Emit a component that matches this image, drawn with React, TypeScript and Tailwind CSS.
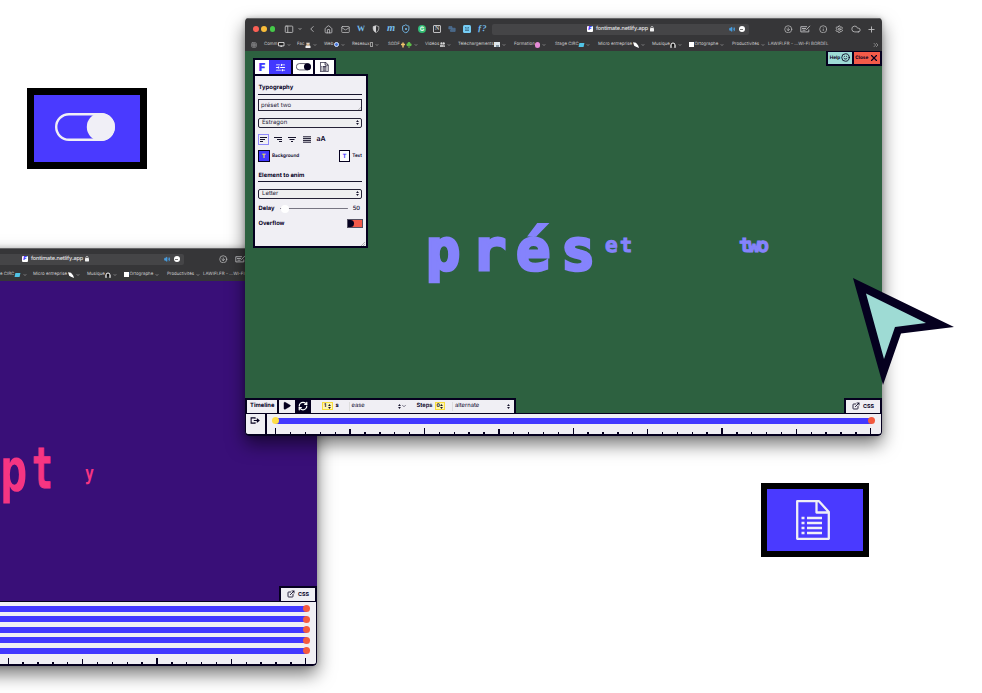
import React from "react";
import {
  ChevronDown, ChevronLeft, ChevronsRight, CircleArrowDown, Cloud,
  ExternalLink, Grid3x3, House, Info, Mail, PanelLeft, Play, Plus, RefreshCw, Settings, Shield,
  SlidersHorizontal, Smile, Volume2, X,
} from "lucide-react";

const ui = "font-['Inter','Liberation_Sans',sans-serif] [text-rendering:geometricPrecision]";

function Cell({ className, children }: { className: string; children: React.ReactNode }) {
  return <div className={`flex shrink-0 items-center justify-center ${className}`}>{children}</div>;
}

function ShieldHalf() {
  return (
    <svg viewBox="0 0 10 10" className="size-[8px]">
      <path d="M5 .8 8.5 2v3Q8.2 8 5 9.5 1.8 8 1.5 5V2Z" fill="none" stroke="#c4c4c6" strokeWidth=".9" />
      <path d="M5 .8V9.5Q1.8 8 1.5 5V2Z" fill="#d4d4d6" />
    </svg>
  );
}

function ToolbarStart() {
  return (
    <div className="flex h-[20px] w-[247px] items-center">
      <div className="ml-[8px] flex gap-[2.8px]">
        <span className="size-[5.5px] rounded-full bg-[#fb6055]" />
        <span className="size-[5.5px] rounded-full bg-[#f9bd3a]" />
        <span className="size-[5.5px] rounded-full bg-[#45ca49]" />
      </div>
      <Cell className="ml-[9px] w-[10px]"><PanelLeft className="h-[8.5px] w-[10px]" preserveAspectRatio="none" strokeWidth={2.2} /></Cell>
      <Cell className="ml-[3px] w-[5px]"><ChevronDown size={4} strokeWidth={5} /></Cell>
      <Cell className="ml-[5px] w-[10px]"><ChevronLeft size={12} strokeWidth={2} /></Cell>
      <Cell className="ml-[6px] w-[10px]"><House size={9} strokeWidth={2.2} /></Cell>
      <Cell className="ml-[7px] w-[10px]"><Mail size={9} strokeWidth={2} /></Cell>
      <Cell className="ml-[6px] w-[10px] font-['Liberation_Serif',serif] text-[8px] font-bold text-[#75bdec]">W</Cell>
      <Cell className="ml-[5px] w-[10px]"><ShieldHalf /></Cell>
      <Cell className="ml-[5px] w-[10px] font-['Liberation_Serif',serif] text-[10.5px] font-bold italic text-[#75bdec]">m</Cell>
      <Cell className="relative ml-[5px] w-[10px] text-[#75bdec]">
        <Shield size={9.5} strokeWidth={2.4} />
        <span className="absolute size-[2.5px] rounded-full bg-[#75bdec]" />
      </Cell>
      <Cell className="ml-[6px] w-[10px]">
        <span className="flex size-[8px] items-center justify-center rounded-full bg-[#32bb72] text-[6px] font-bold text-[#e7fff1]">G</span>
      </Cell>
      <Cell className="ml-[5px] w-[10px]">
        <span className="flex size-[7.5px] items-center justify-center rounded-[1px] border border-[#c0c0c2] font-['Liberation_Serif',serif] text-[6px] font-bold">N</span>
      </Cell>
      <Cell className="ml-[5px] w-[10px]">
        <svg viewBox="0 0 10 10" className="size-[8px]">
          <path d="M1 2h4v3H1z M5 4h4v4H3V6" fill="#4c6682" stroke="#4f7ba8" strokeWidth=".7" />
        </svg>
      </Cell>
      <Cell className="ml-[5px] w-[10px]">
        <svg viewBox="0 0 8 8" className="size-[8px]">
          <rect width="8" height="8" rx="1.5" fill="#76cdf5" />
          <path d="M2 2.5h1.5M4.5 2.5H6M2 4h4M2 5.5h4" stroke="#25445c" strokeWidth=".6" />
        </svg>
      </Cell>
      <Cell className="ml-[5px] w-[10px] font-['Liberation_Serif',serif] text-[9px] font-bold italic text-[#75bdec]">ƒ?</Cell>
    </div>
  );
}

function KeyboardPen() {
  return (
    <svg viewBox="0 0 11 8" className="h-[8px] w-[11px]" fill="none" stroke="currentColor" strokeWidth=".9">
      <path d="M7 1.7H.8v5.2h8V4.5M2 3.5h4M2.5 5.2h3M6.2 4.8 10 .8" />
    </svg>
  );
}

function Toolbar({ cropped }: { cropped: boolean }) {
  return (
    <div className="flex h-[20px] items-center text-[#c0c0c2]">
      {cropped ? <div className="w-[247px]" /> : <ToolbarStart />}
      <div className="flex h-[11px] w-[257px] items-center rounded-[2px] bg-[#454547]">
        <span className="ml-[94.5px] flex size-[6.5px] items-center justify-center rounded-[1px] bg-white text-[5.5px] font-black italic text-[#4238ff]">F</span>
        <span className="ml-[3px] w-[54px] whitespace-nowrap text-[5.5px] font-medium tracking-[-0.02em] text-[#e6e6e8]">fontimate.netlify.app</span>
        <svg viewBox="0 0 6 8" className="h-[5.5px] w-[4px]">
          <rect y="3" width="6" height="5" rx=".7" fill="#eee" />
          <path d="M1.3 3.5V2.2a1.7 1.7 0 013.4 0v1.3" fill="none" stroke="#eee" />
        </svg>
        <Volume2 className="ml-[74.5px] text-[#4a9ee0]" size={6.5} fill="#4a9ee0" strokeWidth={2.5} />
        <span className="ml-[3.5px] flex size-[6.5px] items-center justify-center rounded-full bg-white">
          <span className="h-[1px] w-[3px] bg-[#777]" />
        </span>
      </div>
      <Cell className="ml-[34.5px] w-[10px]"><CircleArrowDown size={8.5} strokeWidth={2} /></Cell>
      <Cell className="ml-[6px] w-[12px]"><KeyboardPen /></Cell>
      <Cell className="ml-[6.5px] w-[10px]"><Info size={8.5} strokeWidth={2} /></Cell>
      <Cell className="ml-[6px] w-[10px]"><Settings size={8.5} strokeWidth={2.4} /></Cell>
      <Cell className="ml-[6.5px] w-[10px]"><Cloud size={10} strokeWidth={2} /></Cell>
      <Cell className="ml-[6px] w-[10px]"><Plus size={9} strokeWidth={2.4} /></Cell>
    </div>
  );
}

const bookmarks: { label: string; icon?: React.ReactNode; width: string }[] = [
  { label: "Comm", width: "w-[33px]", icon: <Monitor /> },
  { label: "Fac", width: "w-[27px]", icon: <Person /> },
  { label: "Web", width: "w-[28px]", icon: <span className="size-[5px] rounded-full border border-[#d9e8ff] bg-[#4776dc]" /> },
  { label: "Reseaux", width: "w-[36px]", icon: <span className="h-[5px] w-[3px] border border-[#999]" /> },
  { label: "SGDF", width: "w-[37px]", icon: <Clover /> },
  { label: "Vidéos", width: "w-[33px]", icon: <Camera /> },
  { label: "Téléchargements", width: "w-[56px]", icon: <span className="flex size-[5.5px] items-end justify-center bg-[#dfe7ec]"><i className="h-[2px] w-[3px] bg-[#8799a5]" /></span> },
  { label: "Formation", width: "w-[41px]", icon: <span className="h-[6px] w-[4.5px] rounded-full bg-[#e58bd6]" /> },
  { label: "Stage CIRC", width: "w-[43px]", icon: <span className="h-[4px] w-[5px] -skew-x-12 bg-[#51c4e6]" /> },
  { label: "Micro entreprise", width: "w-[54px]", icon: <Feather /> },
  { label: "Musique", width: "w-[37px]", icon: <Headphones /> },
  { label: "Ortographe", width: "w-[43px]" },
  { label: "Productivités", width: "w-[36px]" },
];

function Monitor() {
  return (
    <svg viewBox="0 0 7 6" className="h-[5.5px] w-[6.5px]">
      <path d="M.5.5h6v3.7h-6zM2 5.5h3M3.5 4v1.5" fill="#222" stroke="#eee" strokeWidth=".9" />
    </svg>
  );
}
function Person() {
  return (
    <svg viewBox="0 0 6 6" className="size-[6px]">
      <path d="M.5 6V4L1.5 3.3h3L5.5 4V6Z" fill="#eee" />
      <circle cx="3" cy="2.2" r="1.5" fill="#d5b58b" />
      <path d="M1 1.2h4" stroke="#eee" strokeWidth=".7" />
    </svg>
  );
}
function Clover() {
  return (
    <svg viewBox="0 0 12 6" className="h-[6px] w-[12px]">
      <path d="M3 .5v5M1 2.5h4" stroke="#efc46b" strokeWidth="1.5" />
      <path d="M9 3v3" stroke="#5fc04b" />
      <circle cx="7.8" cy="2.8" r="1.4" fill="#5fc04b" />
      <circle cx="9" cy="1.5" r="1.4" fill="#5fc04b" />
      <circle cx="10.3" cy="2.8" r="1.4" fill="#5fc04b" />
    </svg>
  );
}
function Camera() {
  return (
    <svg viewBox="0 0 6 6" className="size-[5.5px]">
      <path d="M0 3h4v3H0zM4 4l2-1v3L4 5Z" fill="#bbb" />
      <circle cx="1.5" cy="1.5" r="1.1" fill="#ddd" />
      <circle cx="4" cy="1.5" r="1.3" fill="#ddd" />
    </svg>
  );
}
function Feather() {
  return (
    <svg viewBox="0 0 6 6" className="size-[6px]">
      <path d="M0 .3 3 .8l2.2 2.7L6 6 3 4.8 1.2 3.7Z" fill="#fff" />
    </svg>
  );
}
function Headphones() {
  return (
    <svg viewBox="0 0 6 6" className="size-[6px]">
      <path d="M1 4.5V3a2 2 0 014 0v1.5" fill="#111" stroke="#fff" strokeWidth="1" />
      <path d="M1 3.5V6M5 3.5V6" stroke="#ddd" strokeWidth="1.2" />
    </svg>
  );
}

function Bookmarks({ cropped }: { cropped: boolean }) {
  const shown = cropped ? bookmarks.slice(9) : bookmarks;
  return (
    <div className="flex h-[11.5px] items-center whitespace-nowrap text-[4.4px] text-[#c9c9cb]">
      {cropped ? (
        <div className="ml-[320px] flex w-[33px] shrink-0 items-center gap-[1px]">
          <span className="pt-[2px]">e CIRC</span>
          <span className="h-[4px] w-[5px] -skew-x-12 bg-[#51c4e6]" />
          <ChevronDown className="ml-[2px]" size={4} strokeWidth={3} />
        </div>
      ) : (
        <Grid3x3 className="ml-[6px] mr-[7px] text-[#929294]" size={6} strokeWidth={2.5} />
      )}
      {shown.map((b) => (
        <div key={b.label} className={`flex shrink-0 items-center gap-[0.5px] ${b.width}`}>
          {b.label === "Ortographe" && <span className="h-[4.5px] w-[5px] bg-white" />}
          <span className="pt-[2px]">{b.label}</span>
          {b.icon}
          <ChevronDown className="ml-[1.5px]" size={4} strokeWidth={3} />
        </div>
      ))}
      <span className="pt-[2px] tracking-[0.01em]">LAWIFI.FR - ...WI-FI BORDEL</span>
      <ChevronsRight className="ml-auto mr-[2px] text-[#aaa]" size={8} strokeWidth={2} />
    </div>
  );
}

function Document({ className, weight }: { className: string; weight: number }) {
  return (
    <svg viewBox="0 0 34 40" className={className} fill="none" stroke="currentColor" strokeWidth={weight} strokeLinejoin="round">
      <path d="M1.2 1.2H23L32.8 12V38.8H1.2Z M20.5 1.2V12.5H32.8" />
      <path d="M5.5 18h3M11 18h15M5.5 23h3M11 23h15M5.5 28h3M11 28h15M5.5 33h3M11 33h15" />
    </svg>
  );
}

function Toggle({ className }: { className: string }) {
  return (
    <svg viewBox="0 0 60 28" className={className}>
      <rect x="1.2" y="1.2" width="57.6" height="25.6" rx="12.8" fill="none" stroke="currentColor" strokeWidth="2.4" />
      <circle cx="45.8" cy="14" r="14" fill="currentColor" />
    </svg>
  );
}

function UpDown() {
  return (
    <svg viewBox="0 0 4 7" className="h-[5px] w-[3px] shrink-0" fill="#17142c">
      <path d="M2 0 4 2.7H0ZM2 7 0 4.3H4Z" />
    </svg>
  );
}

function Select({ value, className }: { value: string; className: string }) {
  return (
    <div className={`flex h-[10px] items-center justify-between rounded-[2px] border border-[#252236] bg-[#efeff0] pl-[3px] pr-[2.5px] text-[6px] leading-none text-[#28253a] ${className}`}>
      <span className="pt-[1.5px]">{value}</span>
      <UpDown />
    </div>
  );
}

function Align({ d }: { d: string }) {
  return (
    <svg viewBox="0 0 8 7" className="h-[7px] w-[8px]">
      <path d={d} stroke="#17142c" strokeWidth="1" />
    </svg>
  );
}

function Panel() {
  return (
    <div className="ml-[8px] mt-[7px] w-[114.5px] text-[#05001f]">
      <div className="flex h-[16px] w-[83px] border-2 border-b-0 border-[#05001f] bg-white">
        <div className="flex w-[14px] items-center justify-center text-[11px] font-black leading-none text-[#4238ff]">F</div>
        <div className="flex w-[22px] items-center justify-center bg-[#4238ff] text-white"><SlidersHorizontal className="h-[9px] w-[11px]" preserveAspectRatio="none" strokeWidth={2.5} /></div>
        <div className="flex w-[24px] items-center justify-center border-x-2 border-[#05001f]"><Toggle className="h-[7.5px] w-[15px]" /></div>
        <div className="flex flex-1 items-center justify-center"><Document className="h-[10px] w-[8.5px]" weight={3} /></div>
      </div>
      <div className="flex h-[174px] flex-col border-2 border-[#05001f] bg-[#f0eff4] pl-[3px] pr-[3.5px]">
        <div className="mt-[5px] flex h-[14px] items-start border-b border-[#17142c] pl-[0.5px] pt-[1.5px] text-[5.9px] font-bold leading-[10px]">Typography</div>
        <div className="relative mt-[3.5px] flex h-[12.5px] items-center border-[1.5px] border-[#252236] pl-[2px] text-[6px] leading-none text-[#28253a]">
          <span className="pt-[1.5px]">préset two</span>
          <svg viewBox="0 0 4 4" className="absolute bottom-0 right-0 size-[3px]"><path d="M0 4 4 0M2 4 4 2" stroke="#888" strokeWidth=".6" /></svg>
        </div>
        <Select value="Estragon" className="mt-[6.5px]" />
        <div className="mt-[6px] flex h-[12px] items-center">
          <div className="flex size-[11px] items-center justify-center border border-[#8e89fa]"><Align d="M0 1.5h7M0 3.5h5M0 5.5h3" /></div>
          <span className="ml-[5px] flex"><Align d="M0 1.5h8M3 3.5h5M5 5.5h3" /></span>
          <span className="ml-[6px] flex"><Align d="M0 1.5h8M1.5 3.5h5M3 5.5h2" /></span>
          <span className="ml-[7px] flex"><Align d="M0 .8h8M0 2.6h8M0 4.4h8M0 6.2h8" /></span>
          <span className="ml-[5.5px] text-[7px] font-semibold">aA</span>
        </div>
        <div className="mt-[4.5px] flex h-[12px] items-center text-[4.7px] font-semibold">
          <span className="flex size-[11.5px] items-center justify-center border border-[#05001f] bg-[#4238ff] text-[6px] font-bold text-[#f6e747]">T</span>
          <span className="ml-[2.5px] pt-[1.5px]">Background</span>
          <span className="ml-auto flex size-[11.5px] items-center justify-center border border-[#05001f] bg-white text-[6px] font-bold text-[#4238ff]">T</span>
          <span className="ml-[2px] pt-[1.5px]">Text</span>
        </div>
        <div className="mt-[6.5px] flex h-[13px] items-start border-b border-[#17142c] pl-[0.5px] pt-[1px] text-[5.9px] font-bold leading-[12px]">Element to anim</div>
        <Select value="Letter" className="mt-[7px]" />
        <div className="mt-[5px] flex h-[10px] items-center text-[5.8px]">
          <span className="w-[18px] pl-[0.5px] pt-[1.5px] font-bold">Delay</span>
          <span className="ml-[4px] flex h-[1.5px] w-[68px] items-center rounded-full bg-[#777582]"><i className="ml-[1px] size-[8px] rounded-full bg-white" /></span>
          <span className="ml-auto mr-[2px] pt-[1.5px] font-medium">50</span>
        </div>
        <div className="mt-[5px] flex h-[10px] items-center justify-between pl-[0.5px] text-[5.8px] font-bold">
          <span className="pt-[1.5px]">Overflow</span>
          <span className="mr-[-1px] flex h-[9px] w-[16.5px] items-center border border-[#555263] bg-[#f35a49]"><i className="h-full w-[6px] rounded-r-full bg-[#05001f]" /></span>
        </div>
        <svg viewBox="0 0 4 4" className="ml-auto mr-[-3px] mt-auto size-[4px]"><path d="M0 4 4 0M2 4 4 2" stroke="#888" strokeWidth=".6" /></svg>
      </div>
    </div>
  );
}

function NumberBox({ value }: { value: string }) {
  return (
    <span className="flex h-[8.5px] w-[10.5px] items-center justify-between border border-[#f7dd3e] bg-[#fff5b0] px-[1px] text-[5px] leading-none">
      <b>{value}</b>
      <UpDown />
    </span>
  );
}

function Controls() {
  return (
    <div className="flex h-[15px] w-[270.5px] items-stretch border-2 border-b-0 border-[#05001f] bg-[#f0eff4] text-[5.8px] text-[#05001f]">
      <div className="flex w-[30px] items-center justify-center pl-[0.5px] pt-[1px] font-bold">Timeline</div>
      <div className="flex w-[18px] items-center justify-center border-l-2 border-[#05001f] pr-[1px]"><Play size={9.5} fill="#05001f" strokeWidth={1} /></div>
      <div className="flex w-[16px] items-center justify-center bg-[#05001f] text-white"><RefreshCw size={10} strokeWidth={3} /></div>
      <div className="ml-[11px] flex items-center">
        <NumberBox value="1" />
        <b className="ml-[3px] w-[4px] pt-[1px]">s</b>
        <span className="ml-[9px] flex h-[9px] w-[52px] items-center justify-between border-l border-[#ddd] pl-[2px]"><span className="pt-[1px]">ease</span><UpDown /></span>
        <ChevronDown size={6} strokeWidth={2} />
        <b className="ml-[10px] w-[18px] pt-[1px] font-semibold">Steps</b>
        <NumberBox value="0" />
        <span className="ml-[7px] flex h-[9px] w-[58px] items-center justify-between border-l border-[#ddd] pl-[2px]"><span className="pt-[1px]">alternate</span><UpDown /></span>
      </div>
    </div>
  );
}

function Track() {
  return (
    <div className="flex h-[6px] items-center justify-between bg-[#4238ff]">
      <span className="ml-[-3px] size-[7px] rounded-full bg-[#ffde45]" />
      <span className="mr-[-3px] size-[7px] rounded-full bg-[#f35a3f]" />
    </div>
  );
}

const ticks = Array.from({ length: 41 }, (_, i) => i);

interface BrowserProps {
  place: string;
  canvas: string;
  tracks: number[];
  cropped?: boolean;
  children: React.ReactNode;
}

// A cropped window hangs off the left edge and leaves out the controls that lie beyond it.
function Browser({ place, canvas, tracks, cropped = false, children }: BrowserProps) {
  return (
    <section className={`absolute h-[418px] w-[637px] rounded-[4px] shadow-[0_8px_18px_rgba(0,0,0,0.55),0_0_5px_rgba(0,0,0,0.22)] ${place}`}>
      <div className="flex h-full flex-col overflow-hidden rounded-[4px]">
        <header className="h-[33px] shrink-0 border-t border-[#656567] bg-[#363638]">
          <Toolbar cropped={cropped} />
          <Bookmarks cropped={cropped} />
        </header>
        <main className={`relative flex min-h-0 flex-1 flex-col justify-between ${canvas}`}>
          {cropped ? <div /> : (
            <div className="flex items-start justify-between">
              <Panel />
              <div className="flex h-[14.5px] w-[56px] border-2 border-t-[1px] border-[#05001f] text-[4.7px] font-bold text-[#05001f]">
                <div className="flex w-[26px] items-center justify-center gap-[1px] border-r-2 border-[#05001f] bg-[#9edbd6]"><span className="pt-[1.5px]">Help</span><Smile size={9} strokeWidth={2.3} /></div>
                <div className="flex flex-1 items-center justify-center gap-[0.5px] bg-[#f35a49]"><span className="pt-[1.5px]">Close</span><X size={10} strokeWidth={2.8} /></div>
              </div>
            </div>
          )}
          {children}
          <div className="flex items-end justify-between">
            {cropped ? <div /> : <Controls />}
            <div className="flex h-[15px] w-[38px] items-center justify-center gap-[3px] border-2 border-b-0 border-[#05001f] bg-[#f0eff4] text-[5.4px] font-bold text-[#05001f]">
              <ExternalLink size={8} strokeWidth={2.5} />
              <span className="pt-[1.5px]">CSS</span>
            </div>
          </div>
        </main>
        <footer className="flex shrink-0 rounded-b-[4px] border-x-[1.5px] border-b-2 border-t-[1.5px] border-[#05001f] bg-[#f0eff4]">
          <div className="flex w-[21px] justify-center border-r-2 border-[#05001f] pt-[3px]">
            <svg viewBox="0 0 12 8" className="h-[7px] w-[11px]">
              <path d="M5.5 2V1H1v6h4.5V6M4 4H8" fill="none" stroke="#05001f" strokeWidth="1.2" />
              <path d="M7.5 1.2 11 4 7.5 6.8Z" fill="#05001f" />
            </svg>
          </div>
          <div className="flex flex-1 flex-col pl-[8px] pr-[9px]">
            <div className="flex flex-col gap-[4.5px] pt-[4px]">
              {tracks.map((t) => <Track key={t} />)}
            </div>
            <div className="mt-[4px] flex h-[6.5px] items-end justify-between">
              {ticks.map((i) => (
                <i key={i} className={`w-[1.4px] bg-[#05001f] ${i % 10 === 0 ? "h-full" : i % 5 === 0 ? "h-[5px]" : "h-[2.5px]"}`} />
              ))}
            </div>
          </div>
        </footer>
      </div>
    </section>
  );
}

const glyph = "absolute block leading-none font-['DejaVu_Sans_Mono',monospace] font-bold";
const heavy = "[-webkit-text-stroke:3px_#8583fc]";
const medium = "[-webkit-text-stroke:1px_#8583fc]";

export default function App() {
  return (
    <div className={`relative h-[693px] w-[982px] overflow-hidden bg-white ${ui}`}>
      <div className="absolute left-[27px] top-[88px] flex h-[81px] w-[120px] items-center justify-center border-[7px] border-black bg-[#4a3aff] pr-[4px] text-[#f0eff6]">
        <Toggle className="mt-[-3px] h-[28px] w-[60px]" />
      </div>

      <Browser place="left-[-320px] top-[248px]" canvas="bg-[#390f78]" tracks={[1, 2, 3, 4, 5]} cropped>
        <div className="absolute inset-y-0 left-[320px] right-0 text-[#f63582]">
          <span className={`${glyph} left-0 top-[160px] origin-left scale-x-[0.76] text-[60px]`}>p</span>
          <span className={`${glyph} left-[32px] top-[160px] origin-left scale-x-[0.6] text-[57px] [-webkit-text-stroke:1px_#f63582]`}>t</span>
          <span className={`${glyph} left-[85px] top-[182px] origin-left scale-x-[0.74] text-[20px]`}>y</span>
        </div>
      </Browser>

      <Browser place="left-[245px] top-[18px]" canvas="bg-[#2d6140]" tracks={[1]}>
        <div className="absolute inset-0 text-[#8583fc]">
          <span className={`${glyph} ${heavy} left-[181px] top-[172px] text-[57px]`}>p</span>
          <span className={`${glyph} ${heavy} left-[227px] top-[172px] text-[57px]`}>r</span>
          <span className={`${glyph} ${heavy} left-[271px] top-[172px] text-[57px]`}>é</span>
          <span className={`${glyph} ${heavy} left-[316px] top-[172px] text-[57px]`}>s</span>
          <span className={`${glyph} ${medium} left-[360px] top-[184px] text-[21px]`}>e</span>
          <span className={`${glyph} ${medium} left-[375px] top-[184px] text-[20px]`}>t</span>
          <span className={`${glyph} ${medium} left-[494px] top-[184px] text-[20px] tracking-[-3px]`}>two</span>
        </div>
      </Browser>

      <svg className="absolute left-[850px] top-[275px] h-[114px] w-[106px]" viewBox="850 275 106 114">
        <path d="M853 278 954 327 901 333.5 883 385Z" fill="#05001f" />
        <path d="M866 293.5 926 323 895 327 884 359Z" fill="#9edbd4" />
      </svg>

      <div className="absolute left-[760.5px] top-[483px] flex h-[74px] w-[108.5px] items-center justify-center border-[6px] border-black bg-[#4a3aff] pr-[3px] text-[#f0eff6]">
        <Document className="h-[40px] w-[34px]" weight={2.3} />
      </div>
    </div>
  );
}
